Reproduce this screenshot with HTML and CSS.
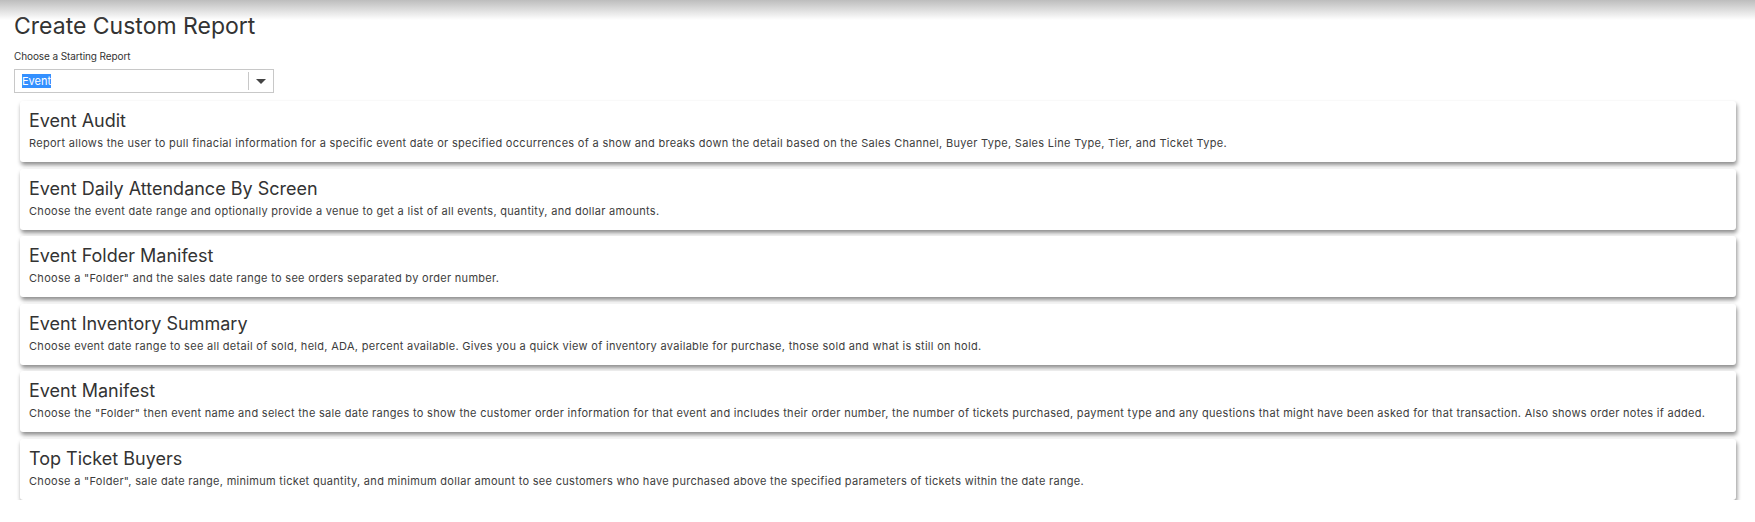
FILE: index.html
```html
<!DOCTYPE html>
<html>
<head>
<meta charset="utf-8">
<link rel="stylesheet" href="styles.css">
</head>
<body>
<div class="topshade"></div>
<main class="page">
  <h1 class="page-title">Create Custom Report</h1>
  <label class="field-label">Choose a Starting Report</label>
  <div class="select">
    <span class="select-value"><span class="sel">Event</span></span>
    <span class="select-arrow"><span class="tri"></span></span>
  </div>
  <div class="cards">
    <div class="card">
      <div class="card-title">Event Audit</div>
      <div class="card-desc">Report allows the user to pull finacial information for a specific event date or specified occurrences of a show and breaks down the detail based on the Sales Channel, Buyer Type, Sales Line Type, Tier, and Ticket Type.</div>
    </div>
    <div class="card">
      <div class="card-title">Event Daily Attendance By Screen</div>
      <div class="card-desc">Choose the event date range and optionally provide a venue to get a list of all events, quantity, and dollar amounts.</div>
    </div>
    <div class="card">
      <div class="card-title">Event Folder Manifest</div>
      <div class="card-desc">Choose a "Folder" and the sales date range to see orders separated by order number.</div>
    </div>
    <div class="card">
      <div class="card-title">Event Inventory Summary</div>
      <div class="card-desc">Choose event date range to see all detail of sold, held, ADA, percent available. Gives you a quick view of inventory available for purchase, those sold and what is still on hold.</div>
    </div>
    <div class="card">
      <div class="card-title">Event Manifest</div>
      <div class="card-desc">Choose the "Folder" then event name and select the sale date ranges to show the customer order information for that event and includes their order number, the number of tickets purchased, payment type and any questions that might have been asked for that transaction. Also shows order notes if added.</div>
    </div>
    <div class="card">
      <div class="card-title">Top Ticket Buyers</div>
      <div class="card-desc">Choose a "Folder", sale date range, minimum ticket quantity, and minimum dollar amount to see customers who have purchased above the specified parameters of tickets within the date range.</div>
    </div>
  </div>
</main>
</body>
</html>
```

FILE: styles.css
```css
html, body {
  margin: 0;
  padding: 0;
  background: #fff;
}
body {
  font-family: "Inter", "Liberation Sans", sans-serif;
  color: #333;
  position: relative;
}
.topshade {
  position: absolute;
  left: 0;
  top: 0;
  right: 0;
  height: 20px;
  background: linear-gradient(#bdbdbd, rgba(255,255,255,0));
  pointer-events: none;
}
.page {
  padding: 11px 19px 0 14px;
}
.page-title {
  margin: 0;
  font-weight: 400;
  font-size: 23px;
  line-height: 30px;
  color: #333;
}
.field-label {
  display: block;
  margin-top: 9px;
  font-size: 10px;
  line-height: 12px;
  letter-spacing: -0.1px;
}
.select {
  display: flex;
  width: 260px;
  height: 24px;
  box-sizing: border-box;
  border: 1px solid #c8c8c8;
  margin-top: 7px;
}
.select-value {
  flex: 1;
  display: flex;
  align-items: center;
  padding-left: 7px;
  font-size: 11px;
}
.sel {
  background: #3390ff;
  color: #fff;
}
.select-arrow {
  width: 24px;
  display: flex;
  align-items: center;
  justify-content: center;
  border-left: 1px solid #c8c8c8;
  margin: 2px 0;
}
.tri {
  width: 0;
  height: 0;
  border-left: 5px solid transparent;
  border-right: 5px solid transparent;
  border-top: 5px solid #444;
}
.cards {
  display: flex;
  flex-direction: column;
  gap: 6.6px;
  margin: 8px 0 0 6px;
}
.card {
  height: 61px;
  box-sizing: border-box;
  padding: 8px 9px 0;
  background: #fff;
  border-radius: 3px;
  box-shadow: 1px 3px 4px rgba(0,0,0,0.45);
}
.card-title {
  font-size: 18px;
  line-height: 24px;
}
.card-desc {
  margin-top: 3px;
  font-size: 11px;
  line-height: 14px;
  letter-spacing: 0.3px;
  color: #3d3d3d;
}
```
